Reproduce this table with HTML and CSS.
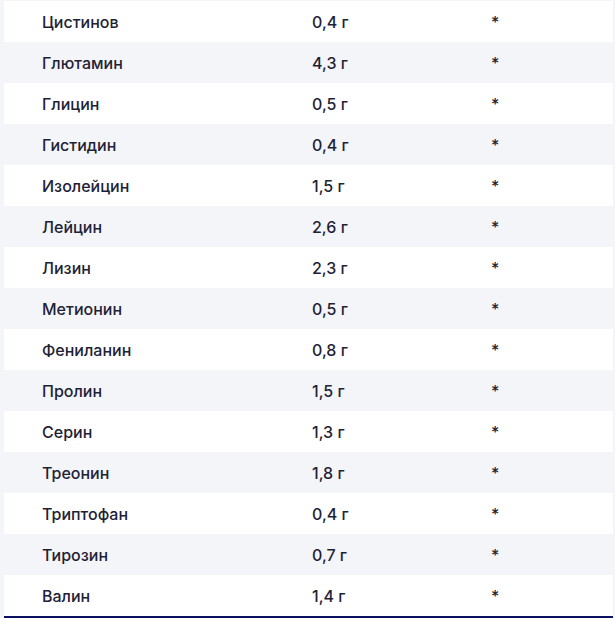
FILE: index.html
```html
<!DOCTYPE html>
<html lang="ru">
<head>
<meta charset="utf-8">
<link rel="stylesheet" href="styles.css">
</head>
<body>
<div class="table">
  <div class="row"><span class="name">Цистинов</span><span class="amount">0,4 г</span><span class="pct">*</span></div>
  <div class="row"><span class="name">Глютамин</span><span class="amount">4,3 г</span><span class="pct">*</span></div>
  <div class="row"><span class="name">Глицин</span><span class="amount">0,5 г</span><span class="pct">*</span></div>
  <div class="row"><span class="name">Гистидин</span><span class="amount">0,4 г</span><span class="pct">*</span></div>
  <div class="row"><span class="name">Изолейцин</span><span class="amount">1,5 г</span><span class="pct">*</span></div>
  <div class="row"><span class="name">Лейцин</span><span class="amount">2,6 г</span><span class="pct">*</span></div>
  <div class="row"><span class="name">Лизин</span><span class="amount">2,3 г</span><span class="pct">*</span></div>
  <div class="row"><span class="name">Метионин</span><span class="amount">0,5 г</span><span class="pct">*</span></div>
  <div class="row"><span class="name">Фениланин</span><span class="amount">0,8 г</span><span class="pct">*</span></div>
  <div class="row"><span class="name">Пролин</span><span class="amount">1,5 г</span><span class="pct">*</span></div>
  <div class="row"><span class="name">Серин</span><span class="amount">1,3 г</span><span class="pct">*</span></div>
  <div class="row"><span class="name">Треонин</span><span class="amount">1,8 г</span><span class="pct">*</span></div>
  <div class="row"><span class="name">Триптофан</span><span class="amount">0,4 г</span><span class="pct">*</span></div>
  <div class="row"><span class="name">Тирозин</span><span class="amount">0,7 г</span><span class="pct">*</span></div>
  <div class="row"><span class="name">Валин</span><span class="amount">1,4 г</span><span class="pct">*</span></div>
</div>
</body>
</html>
```
FILE: styles.css
```css
html, body {
  margin: 0;
  padding: 0;
  background: #f4f5f9;
}
body {
  padding: 1px 2px 0 4px;
  font-family: Inter, "Noto Sans", sans-serif;
  font-size: 16px;
  font-weight: 500;
  color: #1e2235;
}
.table {
  border-bottom: 2px solid #0b1160;
}
.row {
  display: grid;
  grid-template-columns: 270px 179px 1fr;
  height: 41px;
  align-items: center;
  padding-left: 38px;
}
.row:nth-child(odd) {
  background: #ffffff;
}
.row:nth-child(even) {
  background: #f4f5f9;
}
.row span {
  line-height: 20px;
}
```
